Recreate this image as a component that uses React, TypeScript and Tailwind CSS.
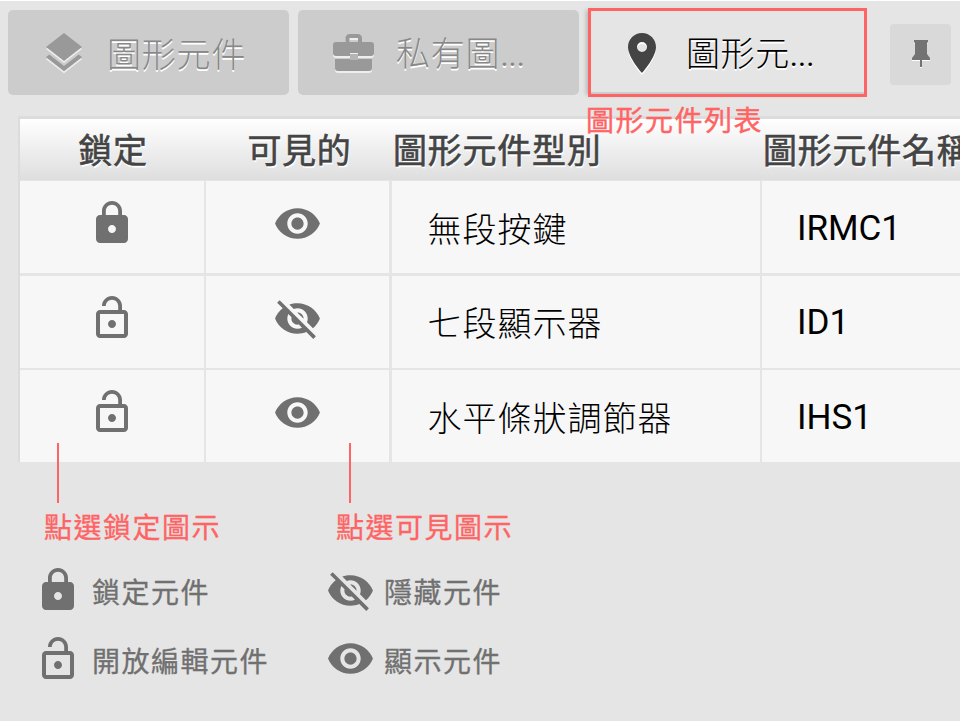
import React from "react";
import { MdLayers, MdPlace, MdLock, MdLockOpen, MdVisibility, MdVisibilityOff } from "react-icons/md";

function Briefcase() {
  return (
    <svg viewBox="0 0 42 38" className="h-[38px] w-[42px] shrink-0 drop-shadow-[0_2px_0_#eee]" fill="#999">
      <path fillRule="evenodd" d="M12.500 8V4.500Q12.500 0 17 0H24.500Q29 0 29 4.500V8H38Q41 8 41 11V19Q41 22 38 22H25V19H17V22H3Q0 22 0 19V11Q0 8 3 8ZM16.500 8H25V4H16.500Z" />
      <path d="M17 20H25V26H17Z" fill="#b5b5b5" />
      <path d="M2 25H17V26H25V25H39V34Q39 37 36 37H5Q2 37 2 34Z" />
    </svg>
  );
}

function Pin() {
  return (
    <svg viewBox="0 0 18 29" className="h-[29px] w-[18px] drop-shadow-[0_1px_0_#fff]" fill="#737373">
      <path d="M2 0H16V2L15 3V14L18 18V20H0V18L3 14V3L2 2Z" />
      <path d="M8 20H10V27H8Z" />
    </svg>
  );
}

const rows = [
  { locked: true, visible: true, type: "無段按鍵", name: "IRMC1" },
  { locked: false, visible: false, type: "七段顯示器", name: "ID1" },
  { locked: false, visible: true, type: "水平條狀調節器", name: "IHS1" },
];

export default function App() {
  return (
    <div className="h-[721px] w-[960px] overflow-hidden border-t border-white bg-[#e5e5e5] font-['Noto_Sans_CJK_TC',sans-serif]">
      <div className="flex h-[115px] items-start">
        <div className="ml-2 mt-[9px] flex h-[85px] w-[281px] items-center rounded-[5px] bg-[#ccc] pl-8 text-[#888]">
          <MdLayers size={48} color="#999" className="shrink-0 drop-shadow-[0_2px_0_#eee]" />
          <span className="ml-[19px] whitespace-nowrap text-[34px] font-light leading-none tracking-[0.8px] [text-shadow:0_2px_0_#fff]">圖形元件</span>
        </div>
        <div className="ml-[9px] mt-[9px] flex h-[85px] w-[281px] items-center rounded-[5px] bg-[#ccc] pl-[35px] text-[#888]">
          <Briefcase />
          <span className="ml-[21px] whitespace-nowrap text-[34px] font-light leading-none tracking-[0.8px] [text-shadow:0_2px_0_#fff]">私有圖<span className="font-[Roboto] text-[31px] font-normal tracking-normal">...</span></span>
        </div>
        <div className="relative ml-[9px] mt-[7px] flex h-[89px] w-[279px] items-center border-[3px] border-[#ff6464] pl-[27px] shadow-[-4px_0_4px_-2px_rgba(0,0,0,0.2),inset_0_-2px_0_#ccc]">
          <MdPlace size={48} color="#444" className="shrink-0 drop-shadow-[0_2px_0_#fff]" />
          <span className="ml-5 whitespace-nowrap text-[34px] font-light leading-none tracking-[0.6px] text-black [text-shadow:0_2px_0_#fff]">圖形元<span className="font-[Roboto] text-[31px] font-normal tracking-normal">...</span></span>
          <span className="absolute left-[-5px] top-[94px] whitespace-nowrap text-[28px] leading-none tracking-[1.5px] text-[#ff6464] [-webkit-text-stroke:0.4px_#ff6464]">圖形元件列表</span>
        </div>
        <div className="ml-[23px] mt-[23px] flex h-[61px] w-[61px] items-center justify-center rounded-[4px] bg-[#d9d9d9]">
          <Pin />
        </div>
      </div>

      <div className="ml-[18px] w-[942px] overflow-hidden border-l-2 border-t-[3px] border-[#dcdcdc]">
        <div className="grid h-[61px] grid-cols-[186px_187px_370px_199px] items-center bg-linear-to-b from-white to-[#dedede] pb-[2px] text-[34px] leading-none tracking-[0.75px] text-[#444] [-webkit-text-stroke:0.6px_#444] [text-shadow:1px_2px_1px_#fff]">
          <div className="text-center">鎖定</div>
          <div className="text-center">可見的</div>
          <div className="whitespace-nowrap">圖形元件型別</div>
          <div className="whitespace-nowrap">圖形元件名稱</div>
        </div>
        <div className="grid grid-cols-[184px_183px_368px_300px] grid-rows-[92px_92px_92px] gap-y-[2.500px] pt-px [column-gap:2.300px]">
          {rows.map((r) => (
            <React.Fragment key={r.name}>
              <div className="flex justify-center bg-[#f7f7f7] pr-px pt-[18px]">
                {r.locked ? <MdLock size={48} color="#707070" /> : <MdLockOpen size={48} color="#707070" />}
              </div>
              <div className="flex justify-center bg-[#f7f7f7] pr-px pt-[18px]">
                {r.visible ? <MdVisibility size={49} color="#707070" /> : <MdVisibilityOff size={49} color="#707070" />}
              </div>
              <div className="flex items-center bg-[#f7f7f7] pl-9 pt-px text-[34px] font-light leading-none tracking-[1px] text-black">{r.type}</div>
              <div className="flex items-center bg-[#f7f7f7] pl-[35px] pt-[2px] font-[Roboto] text-[35px] leading-none text-black">{r.name}</div>
            </React.Fragment>
          ))}
        </div>
      </div>

      <div className="-mt-[19px] flex pl-[34px] text-[28px] leading-none tracking-[1.5px] text-[#707070] [-webkit-text-stroke:0.3px]">
        <div className="w-[292px]">
          <div className="ml-[23px] h-[60px] w-[2px] bg-[#ff6464]" />
          <div className="ml-[10px] mt-[9px] text-[#ff6464]">點選鎖定圖示</div>
          <div className="mt-[26px] flex h-12 items-center"><MdLock size={48} /><span className="ml-[10px] mt-[2px]">鎖定元件</span></div>
          <div className="mt-[21px] flex h-12 items-center"><MdLockOpen size={48} /><span className="ml-[10px] mt-[2px]">開放編輯元件</span></div>
        </div>
        <div className="w-[292px]">
          <div className="ml-[23px] h-[60px] w-[2px] bg-[#ff6464]" />
          <div className="ml-[10px] mt-[9px] text-[#ff6464]">點選可見圖示</div>
          <div className="mt-[26px] flex h-12 items-center"><MdVisibilityOff size={49} /><span className="ml-[9px] mt-[2px]">隱藏元件</span></div>
          <div className="mt-[20px] flex h-12 items-center"><MdVisibility size={49} /><span className="ml-[9px] mt-1">顯示元件</span></div>
        </div>
      </div>
    </div>
  );
}
